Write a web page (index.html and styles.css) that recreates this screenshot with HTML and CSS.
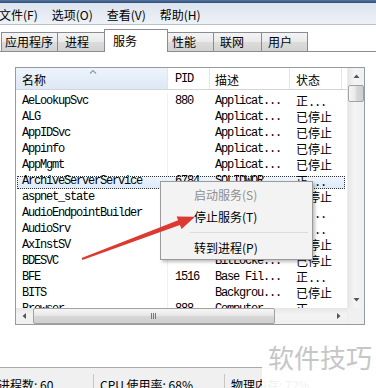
FILE: index.html
```html
<!DOCTYPE html>
<html lang="zh-CN">
<head>
    <meta charset="UTF-8">
    <meta name="viewport" content="width=device-width, initial-scale=1.0">
    <title>Windows 任务管理器</title>
    <link rel="stylesheet" href="styles.css">
</head>
<body>
    <div class="window">
        <div class="titlebar"></div>
        <div class="menubar">
            <span>文件(F)</span>
            <span>选项(O)</span>
            <span>查看(V)</span>
            <span>帮助(H)</span>
        </div>
        <div class="tabs">
            <span class="tab tab-apps">应用程序</span>
            <span class="tab tab-proc">进程</span>
            <span class="tab tab-svc active">服务</span>
            <span class="tab tab-perf">性能</span>
            <span class="tab tab-net">联网</span>
            <span class="tab tab-user">用户</span>
        </div>

        <div class="page">
            <div class="list">
                <div class="list-main">
                    <div class="head">
                        <div class="c-name sorted">名称
                            <svg class="sort-arrow" width="8" height="5" viewBox="0 0 8 5"><polyline points="1,4.5 4,1.5 7,4.5" fill="none" stroke="#8d99aa" stroke-width="1.2"/></svg>
                        </div>
                        <div class="c-pid mono">PID</div>
                        <div class="c-desc">描述</div>
                        <div class="c-stat">状态</div>
                        <div class="c-fill"></div>
                    </div>
                    <div class="rows">
                        <div class="row"><span class="c-name">AeLookupSvc</span><span class="c-pid">880</span><span class="c-desc">Applicat...</span><span class="c-stat">正<i>...</i></span></div>
                        <div class="row"><span class="c-name">ALG</span><span class="c-pid"></span><span class="c-desc">Applicat...</span><span class="c-stat">已停止</span></div>
                        <div class="row"><span class="c-name">AppIDSvc</span><span class="c-pid"></span><span class="c-desc">Applicat...</span><span class="c-stat">已停止</span></div>
                        <div class="row"><span class="c-name">Appinfo</span><span class="c-pid"></span><span class="c-desc">Applicat...</span><span class="c-stat">已停止</span></div>
                        <div class="row"><span class="c-name">AppMgmt</span><span class="c-pid"></span><span class="c-desc">Applicat...</span><span class="c-stat">已停止</span></div>
                        <div class="row sel"><span class="c-name">ArchiveServerService</span><span class="c-pid">6784</span><span class="c-desc">SOLIDWOR...</span><span class="c-stat">正<i>...</i></span></div>
                        <div class="row"><span class="c-name">aspnet_state</span><span class="c-pid"></span><span class="c-desc">ASP.NET ...</span><span class="c-stat">已停止</span></div>
                        <div class="row"><span class="c-name">AudioEndpointBuilder</span><span class="c-pid">1028</span><span class="c-desc">Windows ...</span><span class="c-stat">正<i>...</i></span></div>
                        <div class="row"><span class="c-name">AudioSrv</span><span class="c-pid">1160</span><span class="c-desc">Windows ...</span><span class="c-stat">正<i>...</i></span></div>
                        <div class="row"><span class="c-name">AxInstSV</span><span class="c-pid"></span><span class="c-desc">ActiveX ...</span><span class="c-stat">已停止</span></div>
                        <div class="row"><span class="c-name">BDESVC</span><span class="c-pid"></span><span class="c-desc">BitLocke...</span><span class="c-stat">已停止</span></div>
                        <div class="row"><span class="c-name">BFE</span><span class="c-pid">1516</span><span class="c-desc">Base Fil...</span><span class="c-stat">正<i>...</i></span></div>
                        <div class="row"><span class="c-name">BITS</span><span class="c-pid"></span><span class="c-desc">Backgrou...</span><span class="c-stat">已停止</span></div>
                        <div class="row"><span class="c-name">Browser</span><span class="c-pid">888</span><span class="c-desc">Computer...</span><span class="c-stat">正<i>...</i></span></div>
                    </div>
                    <div class="hscroll">
                        <div class="sb-btn"><svg width="17" height="16"><polygon points="10,5 6.5,8 10,11" fill="#555"/></svg></div>
                        <div class="h-thumb"><svg width="8" height="6"><path d="M1.5 0v6M3.5 0v6M5.5 0v6" stroke="#777" stroke-width="1"/></svg></div>
                        <div class="sb-track"></div>
                        <div class="sb-btn"><svg width="17" height="16"><polygon points="7,5 10.5,8 7,11" fill="#555"/></svg></div>
                    </div>
                </div>
                <div class="vscroll">
                    <div class="sb-btn"><svg width="17" height="17"><polygon points="5.5,10 8.5,6.5 11.5,10" fill="#555"/></svg></div>
                    <div class="v-thumb"></div>
                    <div class="sb-track v"></div>
                    <div class="sb-btn"><svg width="17" height="17"><polygon points="5.5,7 8.5,10.5 11.5,7" fill="#555"/></svg></div>
                    <div class="corner"></div>
                </div>
            </div>
        </div>

        <div class="status">
            <span class="panel first">进程数: 60</span>
            <span class="panel cpu">CPU 使用率: 68%</span>
            <span class="panel">物理内存: 72%</span>
        </div>

        <!-- 右键菜单 -->
        <div class="ctx-menu">
            <div class="item disabled">启动服务(S)</div>
            <div class="item">停止服务(T)</div>
            <div class="sep"></div>
            <div class="item">转到进程(P)</div>
        </div>

        <svg class="arrow" width="376" height="388" viewBox="0 0 376 388">
            <polygon points="82.4,260 179.9,224.9 181.6,229 195,216.8 176.6,216.4 178.1,220.3 81.6,258" fill="#dc3a31"/>
        </svg>

        <div class="watermark">软件技巧</div>
    </div>
</body>
</html>
```

FILE: styles.css
```css
*{
    margin: 0;
    padding: 0;
    box-sizing: border-box;
}
body{
    width: 376px;
    height: 388px;
    overflow: hidden;
    background-color: #fff;
    font-family: "Noto Sans CJK SC", sans-serif;
    font-size: 12px;
    color: #000;
}
.window{
    position: relative;
    width: 376px;
    height: 388px;
    overflow: hidden;
    display: flex;
    flex-direction: column;
}
.titlebar{
    height: 3px;
    background: linear-gradient(#5574a0, #2d4d78);
}
.menubar{
    height: 22px;
    display: flex;
    gap: 14px;
    padding-top: 3px;
    line-height: 18px;
    background: linear-gradient(#dde4ee, #eef2f7);
    border-bottom: 1px solid #b9c0ca;
}
.menubar span:first-child{
    margin-left: -1px;
}

/* tabs */
.tabs{
    height: 27px;
    display: flex;
    align-items: flex-end;
    padding-left: 1px;
    border-bottom: 1px solid #898c95;
}
.tab{
    height: 19px;
    line-height: 17px;
    margin-right: -1px;
    border: 1px solid #898c95;
    border-bottom: none;
    background: linear-gradient(#f4f4f4, #e9e9e9 50%, #dcdcdc 50%, #d2d2d2);
    white-space: nowrap;
}
.tab.active{
    position: relative;
    z-index: 1;
    height: 23px;
    line-height: 21px;
    margin-bottom: -1px;
    background: #fff;
}
.tab-apps{ width: 57px; padding-left: 3px; }
.tab-proc{ width: 48px; padding-left: 7px; }
.tab-svc{ width: 64px; padding-left: 8px; }
.tab-perf{ width: 47px; padding-left: 4px; }
.tab-net{ width: 49px; padding-left: 6px; }
.tab-user{ width: 47px; padding-left: 6px; }

/* services list */
.page{
    height: 315px;
    padding: 15px 0 0 15px;
    background-color: #fff;
}
.list{
    width: 350px;
    height: 258px;
    display: flex;
    border: 1px solid #959ba2;
}
.list-main{
    width: 331px;
    display: flex;
    flex-direction: column;
}
.head{
    height: 22px;
    display: flex;
    border-bottom: 1px solid #d5d5d5;
    line-height: 19px;
}
.head > div{
    padding-top: 2px;
    border-right: 1px solid #e3e5e8;
}
.head .sorted{
    position: relative;
    background: linear-gradient(#eef4fb, #dce8f6);
}
.sort-arrow{
    position: absolute;
    left: 73px;
    top: 1px;
}
.head .c-stat{
    width: 52px;
}
.head .c-fill{
    flex: 1;
    border-right: none;
}
.mono,
.rows .c-name,
.rows .c-pid,
.rows .c-desc,
.c-stat i{
    font-family: "Liberation Mono", monospace;
    font-size: 12px;
    letter-spacing: -1.2px;
}
.c-stat i{
    font-style: normal;
}
.c-name{ width: 152px; padding-left: 6px; }
.c-pid{ width: 42px; padding-left: 7px; }
.c-desc{ width: 80px; padding-left: 5px; }
.c-stat{ width: 57px; padding-left: 6px; }
.rows{
    height: 218px;
    padding-top: 3px;
    overflow: hidden;
}
.row{
    height: 16px;
    line-height: 16px;
    display: flex;
    white-space: nowrap;
}
.row span{
    flex-shrink: 0;
    overflow: hidden;
}
.rows .c-name{
    border-right: 1px solid #f1f1f1;
}
.row.sel{
    position: relative;
    z-index: 0;
}
.row.sel::before{
    content: "";
    position: absolute;
    left: 1px;
    right: 2px;
    top: 3px;
    bottom: 0;
    z-index: -1;
    background: linear-gradient(#eef5fd, #dbeafb);
    outline: 1px dotted #333;
    outline-offset: -1px;
}

/* scrollbars */
.hscroll{
    height: 16px;
    display: flex;
    background: linear-gradient(#e6e6e6, #f3f3f3 40%, #f0f0f0);
}
.sb-btn{
    width: 17px;
    display: flex;
}
.sb-track{
    flex: 1;
}
.h-thumb{
    width: 242px;
    display: flex;
    align-items: center;
    justify-content: center;
    border: 1px solid #a2a2a2;
    border-radius: 2px;
    background: linear-gradient(#f6f6f6, #e8e8e8 45%, #d6d6d6 55%, #cfcfcf);
}
.vscroll{
    width: 17px;
    display: flex;
    flex-direction: column;
    background: linear-gradient(90deg, #e6e6e6, #f4f4f4 40%, #f0f0f0);
    border-left: 1px solid #ececec;
}
.vscroll .sb-btn{
    height: 17px;
}
.v-thumb{
    height: 17px;
    border: 1px solid #a2a2a2;
    border-radius: 2px;
    background: linear-gradient(90deg, #f6f6f6, #e8e8e8 45%, #d6d6d6 55%, #cfcfcf);
}
.corner{
    height: 16px;
    background-color: #f0f0f0;
}

/* status bar */
.status{
    height: 21px;
    display: flex;
    background-color: #f0f0f0;
    border-top: 1px solid #a9a9a9;
    white-space: nowrap;
}
.panel{
    margin-top: 6px;
    padding: 3px 0 0 6px;
    line-height: 16px;
    border-left: 1px solid #c6c6c6;
}
.panel.first{
    width: 93px;
    padding-left: 0;
    border-left: none;
    text-indent: -2px;
}
.panel.cpu{
    width: 131px;
}

/* context menu */
.ctx-menu{
    position: absolute;
    left: 160px;
    top: 181px;
    width: 153px;
    height: 79px;
    padding-top: 2px;
    background-color: #f3f3f3;
    border: 1px solid #9a9a9a;
    box-shadow: 2px 2px 3px rgba(0, 0, 0, 0.25);
    z-index: 5;
}
.item{
    height: 22px;
    line-height: 22px;
    padding-left: 33px;
}
.item.disabled{
    color: #8e8e8e;
}
.sep{
    height: 9px;
    margin: 0 4px 0 29px;
    border-bottom: 4px solid #f3f3f3;
    background: linear-gradient(#f3f3f3 4px, #dcdcdc 4px, #dcdcdc 5px, #fff 5px);
}

.arrow{
    position: absolute;
    left: 0;
    top: 0;
    z-index: 6;
    pointer-events: none;
}
.watermark{
    position: absolute;
    left: 262px;
    top: 340px;
    right: 0;
    bottom: 0;
    padding: 2px 0 0 6px;
    line-height: 30px;
    font-size: 26px;
    color: #c6c6c6;
    background-color: rgba(255, 255, 255, 0.94);
    z-index: 7;
}
```
